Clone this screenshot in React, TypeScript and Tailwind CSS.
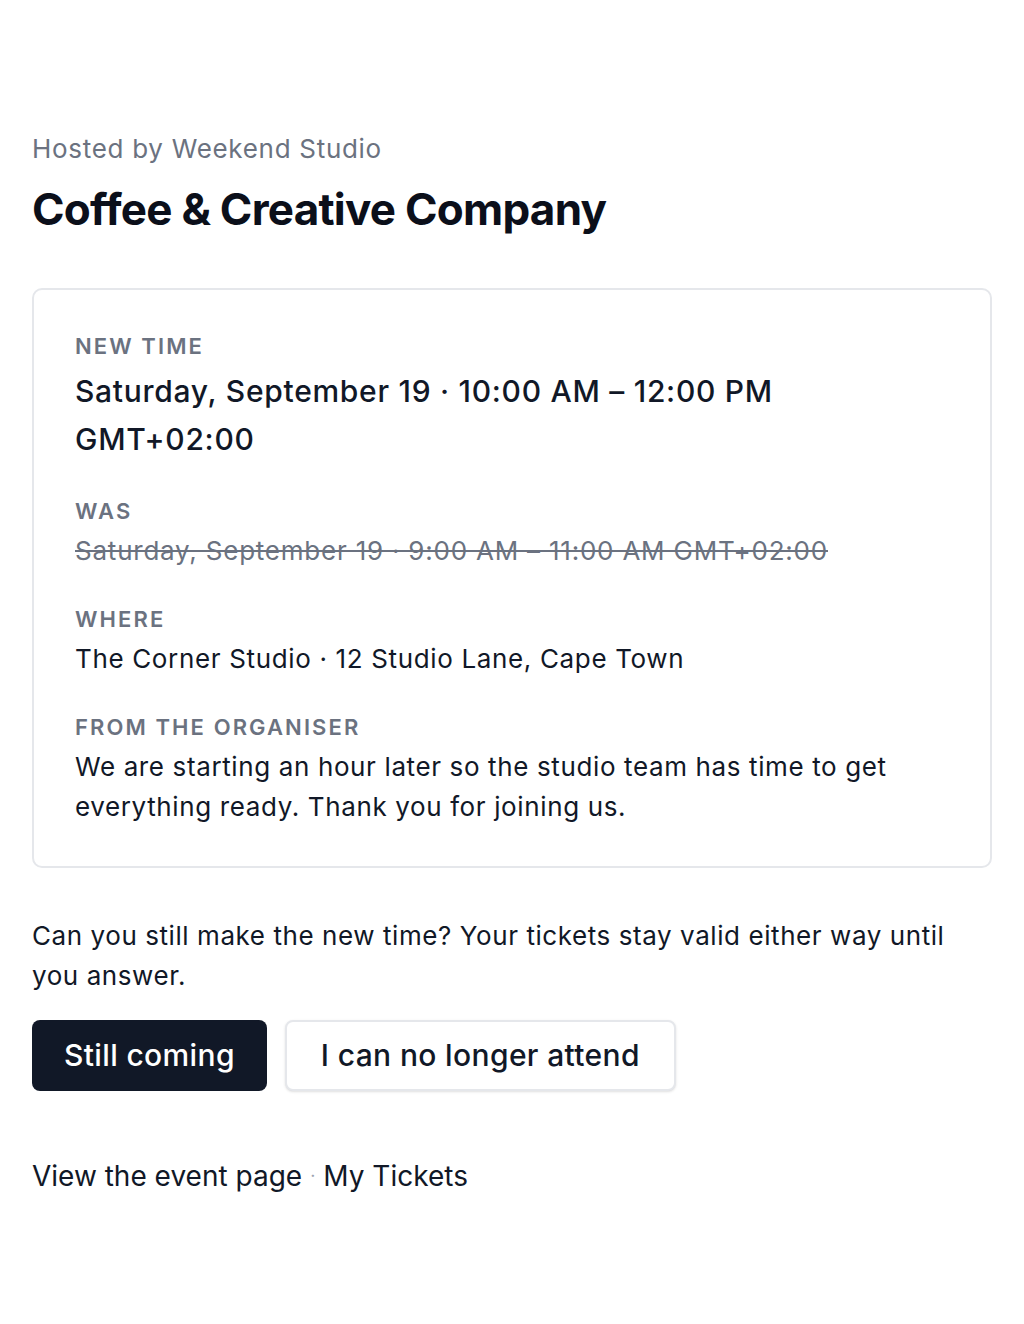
import React from "react";

const label =
  "text-[22px] font-semibold uppercase leading-[32px] tracking-[0.095em] text-[#6b7280]";

export default function App() {
  return (
    <div
      className="min-h-[1324px] bg-white px-8 pt-[129px] text-[#111827]"
      style={{ fontFamily: "Inter, 'Noto Sans', sans-serif" }}
    >
      <p className="text-[26px] leading-[40px] tracking-[0.027em] text-[#6b7280]">Hosted by Weekend Studio</p>
      <h1 className="mt-[14px] text-[44px] font-bold leading-[52px] tracking-[-0.017em] text-[#0b0f1a]">
        Coffee &amp; Creative Company
      </h1>

      <div className="mt-[53px] rounded-[10px] border-2 border-[#e5e7eb] pb-[39px] pl-[41px] pr-10 pt-10">
        <div className="flex flex-col gap-8">
          <div>
            <div className={label}>New time</div>
            <div className="mt-[5px] text-[30px] font-medium leading-[48px] tracking-[0.024em]">
              Saturday, September 19 · 10:00 AM – 12:00 PM
              <br />
              GMT+02:00
            </div>
          </div>
          <div>
            <div className={label}>Was</div>
            <div className="mt-1 text-[26px] leading-[40px] tracking-[0.03em] text-[#6b7280] line-through">
              Saturday, September 19 · 9:00 AM – 11:00 AM GMT+02:00
            </div>
          </div>
          <div>
            <div className={label}>Where</div>
            <div className="mt-1 text-[26px] leading-[40px] tracking-[0.025em]">
              The Corner Studio · 12 Studio Lane, Cape Town
            </div>
          </div>
          <div>
            <div className={label}>From the organiser</div>
            <div className="mt-1 text-[26px] leading-[40px] tracking-[0.024em]">
              We are starting an hour later so the studio team has time to get
              <br />
              everything ready. Thank you for joining us.
            </div>
          </div>
        </div>
      </div>

      <p className="mt-12 text-[26px] leading-[40px] tracking-[0.022em]">
        Can you still make the new time? Your tickets stay valid either way until
        <br />
        you answer.
      </p>

      <div className="mt-6 flex gap-[18px]">
        <button className="h-[71px] rounded-lg bg-[#111827] px-8 text-[30px] font-medium tracking-[0.012em] text-white">
          Still coming
        </button>
        <button className="h-[71px] rounded-lg border-2 border-[#e5e7eb] bg-white px-[34px] text-[30px] font-medium tracking-[0.012em] text-[#111827] shadow-sm">
          I can no longer attend
        </button>
      </div>

      <div className="mt-[65px] flex items-center text-[28px] leading-[40px]">
        <span>View the event page</span>
        <span className="mx-[8px] text-[18px] text-[#9ca3af]">·</span>
        <span>My Tickets</span>
      </div>
    </div>
  );
}
